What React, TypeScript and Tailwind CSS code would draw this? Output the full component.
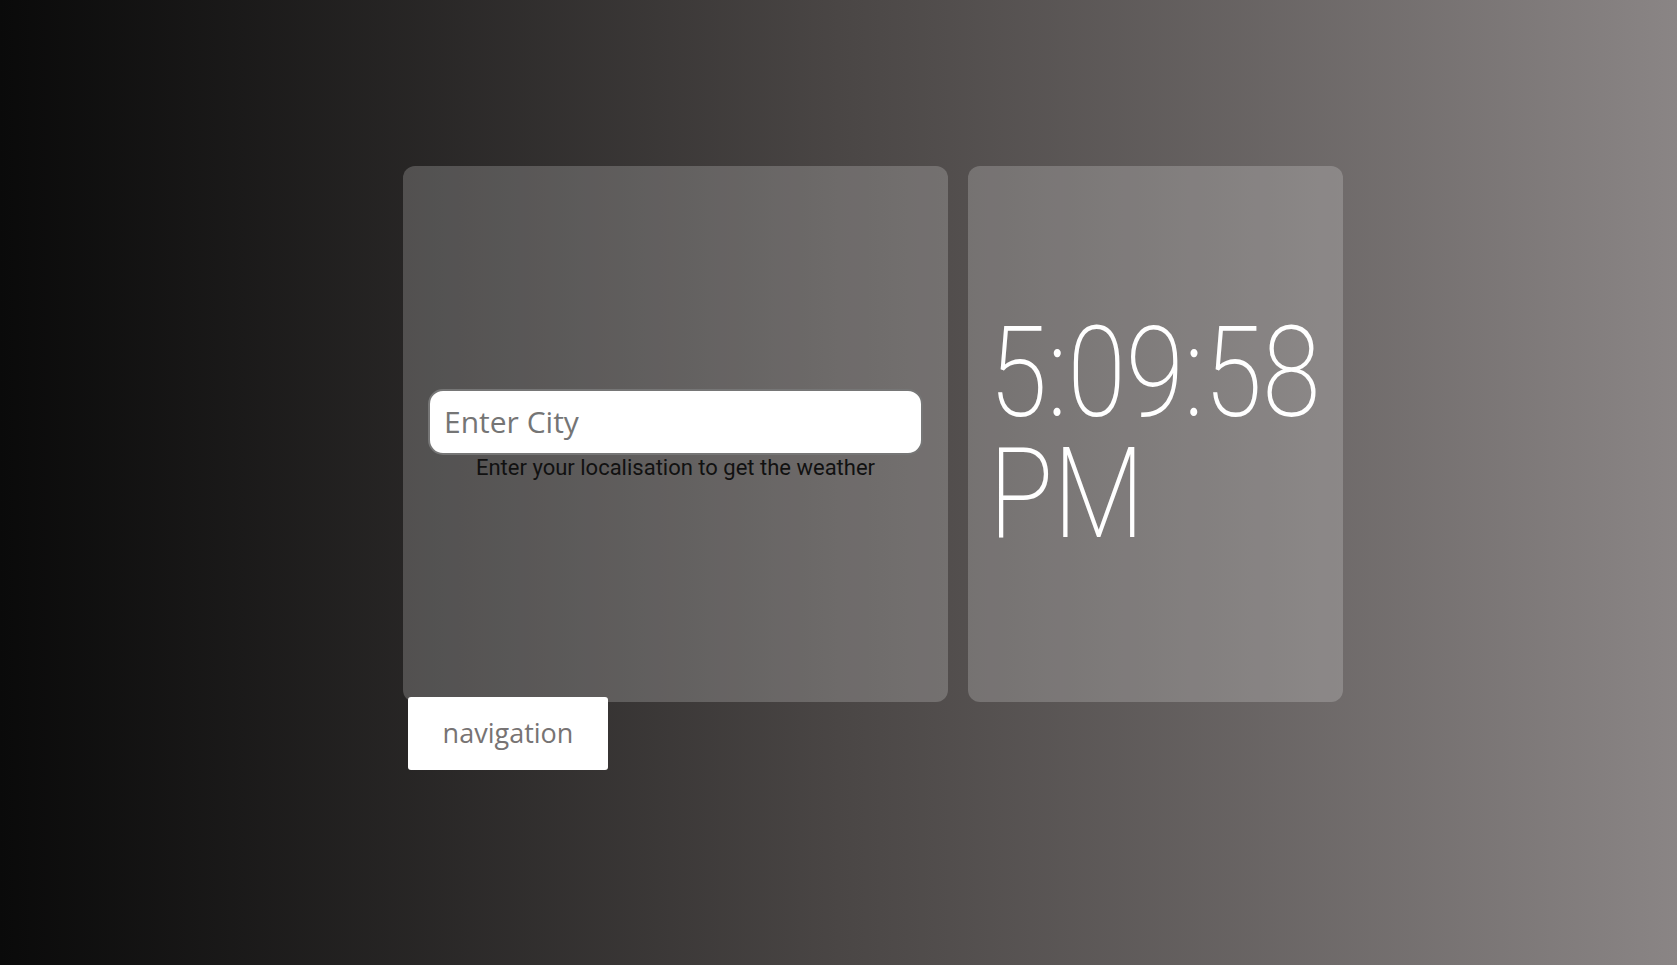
import React from "react";

export default function App() {
  return (
    <div className="min-h-screen w-full bg-gradient-to-r from-[#0a0a0a] via-[#4a4645] to-[#8a8585] overflow-hidden">
      <div className="pl-[403px] pt-[166px] flex flex-col items-start">
        <div className="flex flex-row gap-[20px]">
          <div className="w-[545px] h-[536px] rounded-xl bg-white/20 flex flex-col items-center justify-center">
            <input
              type="text"
              placeholder="Enter City"
              className="w-[495px] h-[66px] rounded-[15px] border-2 border-[#767676] bg-white px-[14px] text-[30px] text-[#333] placeholder:text-[#757575] outline-none font-['Open_Sans',sans-serif]"
            />
            <p className="text-[22px] leading-[25px] text-[#111] font-['Roboto',sans-serif]">
              Enter your localisation to get the weather
            </p>
          </div>
          <div className="w-[375px] h-[536px] rounded-xl bg-white/20 flex items-center pl-[21px]">
            <div className="w-min text-white text-[126px] leading-[121px] font-extralight font-['Roboto',sans-serif] scale-x-[0.84] origin-left whitespace-normal">
              5:09:58 PM
            </div>
          </div>
        </div>
        <button className="relative z-10 -mt-[5px] ml-[5px] w-[200px] h-[73px] bg-white rounded-[3px] text-[27px] text-[#777373] font-['Open_Sans',sans-serif]">
          navigation
        </button>
      </div>
    </div>
  );
}
